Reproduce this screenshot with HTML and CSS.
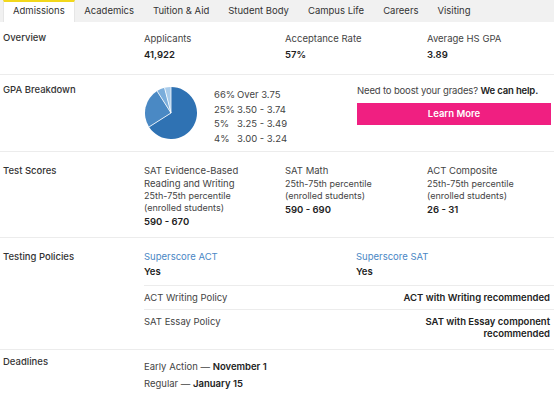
FILE: index.html
```html
<!DOCTYPE html>
<html>
<head>
<meta charset="utf-8">
<link rel="stylesheet" href="styles.css">
</head>
<body>
<nav class="tabs">
  <div class="tab active">Admissions</div>
  <div class="tab">Academics</div>
  <div class="tab">Tuition &amp; Aid</div>
  <div class="tab">Student Body</div>
  <div class="tab">Campus Life</div>
  <div class="tab">Careers</div>
  <div class="tab">Visiting</div>
</nav>

<section class="row overview">
  <div class="label">Overview</div>
  <div class="content cols3">
    <div class="stat"><div class="title">Applicants</div><div class="value">41,922</div></div>
    <div class="stat"><div class="title">Acceptance Rate</div><div class="value">57%</div></div>
    <div class="stat"><div class="title">Average HS GPA</div><div class="value">3.89</div></div>
  </div>
</section>

<section class="row gpa">
  <div class="label">GPA Breakdown</div>
  <div class="content gpa-content">
    <svg class="pie" width="52" height="52" viewBox="0 0 52 52">
      <path d="M26 26 L26 0 A26 26 0 1 1 4.05 39.93 Z" fill="#2f72b3"/>
      <path d="M26 26 L4.05 39.93 A26 26 0 0 1 12.07 4.05 Z" fill="#4a89c4"/>
      <path d="M26 26 L12.07 4.05 A26 26 0 0 1 19.53 0.82 Z" fill="#7aaddb"/>
      <path d="M26 26 L19.53 0.82 A26 26 0 0 1 26 0 Z" fill="#a8cbea"/>
      <g stroke="#fff" stroke-width="0.8">
        <line x1="26" y1="26" x2="4.05" y2="39.93"/>
        <line x1="26" y1="26" x2="12.07" y2="4.05"/>
        <line x1="26" y1="26" x2="19.53" y2="0.82"/>
        <line x1="26" y1="26" x2="26" y2="0"/>
      </g>
    </svg>
    <ul class="legend">
      <li><span class="pct">66%</span><span>Over 3.75</span></li>
      <li><span class="pct">25%</span><span>3.50 - 3.74</span></li>
      <li><span class="pct">5%</span><span>3.25 - 3.49</span></li>
      <li><span class="pct">4%</span><span>3.00 - 3.24</span></li>
    </ul>
    <div class="promo">
      <p>Need to boost your grades? <b>We can help.</b></p>
      <div class="btn">Learn More</div>
    </div>
  </div>
</section>

<section class="row scores">
  <div class="label">Test Scores</div>
  <div class="content cols3">
    <div class="score">
      <div class="title">SAT Evidence-Based Reading and Writing</div>
      <div class="sub">25th-75th percentile (enrolled students)</div>
      <div class="value">590 - 670</div>
    </div>
    <div class="score">
      <div class="title">SAT Math</div>
      <div class="sub">25th-75th percentile (enrolled students)</div>
      <div class="value">590 - 690</div>
    </div>
    <div class="score">
      <div class="title">ACT Composite</div>
      <div class="sub">25th-75th percentile (enrolled students)</div>
      <div class="value">26 - 31</div>
    </div>
  </div>
</section>

<section class="row policies">
  <div class="label">Testing Policies</div>
  <div class="content policy-list">
    <div class="super">
      <div><div class="link">Superscore ACT</div><div class="value">Yes</div></div>
      <div><div class="link">Superscore SAT</div><div class="value">Yes</div></div>
    </div>
    <div class="policy"><span>ACT Writing Policy</span><b>ACT with Writing recommended</b></div>
    <div class="policy"><span>SAT Essay Policy</span><b>SAT with Essay component<br>recommended</b></div>
  </div>
</section>

<section class="row deadlines">
  <div class="label">Deadlines</div>
  <div class="content">
    <div class="dl">Early Action — <b>November 1</b></div>
    <div class="dl">Regular — <b>January 15</b></div>
  </div>
</section>
</body>
</html>
```
FILE: styles.css
```css
* { box-sizing: border-box; }
html, body { margin: 0; padding: 0; background: #fff; }
body {
  font-family: Inter, "Liberation Sans", sans-serif;
  font-size: 9.5px;
  color: #444;
  width: 554px;
  overflow: hidden;
}
b { font-weight: 600; color: #222; }

.tabs {
  display: flex;
  height: 22px;
  background: #f1f1f1;
  padding-left: 3px;
}
.tab {
  padding: 5px 9.5px 0;
  color: #333;
  font-size: 9.5px;
  line-height: 12px;
}
.tab.active {
  background: #fff;
  border-top: 2px solid #f2d81c;
  padding-top: 3px;
  padding-left: 9px;
  padding-right: 9px;
  border-left: 1px solid #e6e6e6;
  border-right: 1px solid #e6e6e6;
}

.row {
  display: flex;
  border-bottom: 1px solid #ececec;
}
.label {
  width: 144px;
  flex: none;
  padding-left: 3px;
  color: #333;
  font-weight: 500;
  line-height: 12px;
}
.content { flex: 1; }
.cols3 { display: grid; grid-template-columns: 141px 142px 1fr; }

.title { line-height: 12px; color: #444; }
.value { font-weight: 600; color: #222; line-height: 12px; margin-top: 4px; }

.overview { height: 53px; padding-top: 10px; }
.overview .content { padding-top: 1px; }

.gpa { height: 77px; padding-top: 9px; }
.gpa-content { display: flex; }
.pie { margin-top: 3px; margin-left: 1px; flex: none; }
.legend {
  list-style: none;
  margin: 4px 0 0 17px;
  padding: 0;
  width: 143px;
  flex: none;
}
.legend li { line-height: 14.5px; white-space: nowrap; }
.legend .pct { display: inline-block; width: 23px; }
.promo { width: 194px; }
.promo p { margin: 1px 0 0; line-height: 12px; color: #444; letter-spacing: -0.15px; }
.btn {
  margin-top: 6px;
  height: 22px;
  background: #f01f81;
  color: #fff;
  font-weight: 600;
  text-align: center;
  line-height: 22px;
}

.scores { height: 86px; padding-top: 13px; }
.score .title { width: 112px; line-height: 12.5px; }
.score .sub { font-size: 9px; line-height: 12px; width: 118px; }
.score:last-child .sub { width: 125px; }
.score .value { margin-top: 2px; }

.policies { height: 112px; padding-top: 13px; }
.policy-list { padding-right: 4px; }
.super { display: grid; grid-template-columns: 212px 1fr; height: 35px; border-bottom: 1px solid #ececec; margin-right: -4px; }
.link { color: #4a87c5; line-height: 12px; }
.super .value { margin-top: 3px; }
.policy {
  display: flex;
  justify-content: space-between;
  align-items: flex-start;
  padding-top: 6px;
  line-height: 12px;
  min-height: 24px;
  border-bottom: 1px solid #ececec;
  margin-right: -4px;
  padding-right: 4px;
}
.policy:last-child { border-bottom: none; }
.policy b { text-align: right; }

.deadlines { border-bottom: none; padding-top: 6px; }
.deadlines .content { padding-top: 5px; }
.dl { line-height: 12px; margin-bottom: 5px; }
```
